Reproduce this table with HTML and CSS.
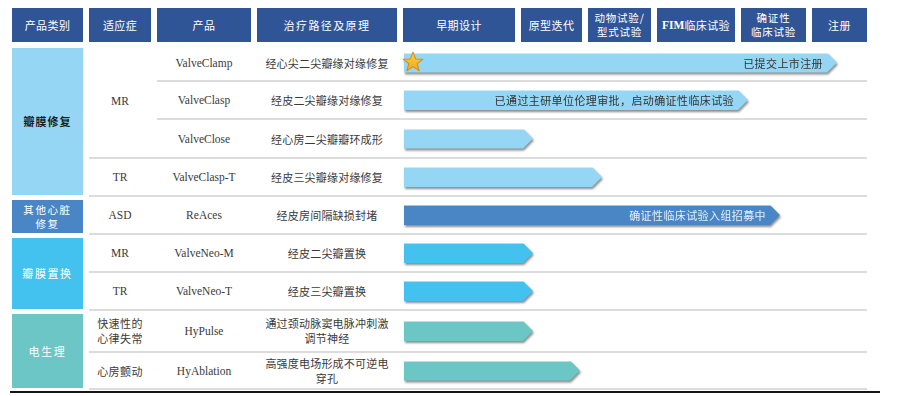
FILE: index.html
```html
<!DOCTYPE html>
<html lang="zh">
<head>
<meta charset="utf-8">
<title>产品管线</title>
<link rel="stylesheet" href="styles.css">
</head>
<body>
<div class="page">
  <div class="head">
    <div class="hc">产品类别</div>
    <div class="hc">适应症</div>
    <div class="hc">产品</div>
    <div class="hc wide">治疗路径及原理</div>
    <div class="hc">早期设计</div>
    <div class="hc">原型迭代</div>
    <div class="hc two">动物试验/<br>型式试验</div>
    <div class="hc"><b class="lat">FIM</b>临床试验</div>
    <div class="hc two">确证性<br>临床试验</div>
    <div class="hc">注册</div>
  </div>

  <div class="body">
    <div class="cat c-light r1s4"><span class="dark">瓣膜修复</span></div>
    <div class="cat c-steel r5s1">其他心脏<br>修复</div>
    <div class="cat c-cyan r6s2">瓣膜置换</div>
    <div class="cat c-teal r8s2">电生理</div>

    <div class="ind r1s3 ln">MR</div>
    <div class="cell prod lat">ValveClamp</div>
    <div class="cell prin">经心尖二尖瓣缘对缘修复</div>
    <div class="cell tl"><div class="arrow" style="width:433px"><span class="fill a-light"><span class="atx">已提交上市注册</span></span><svg class="star" viewBox="0 0 24 24" width="22" height="22"><defs><linearGradient id="sg" x1="0" y1="0" x2="0" y2="1"><stop offset="0" stop-color="#ffd24a"/><stop offset="1" stop-color="#f0a814"/></linearGradient></defs><polygon points="12,1.2 14.9,8.6 22.8,8.9 16.6,13.8 18.8,21.6 12,17.1 5.2,21.6 7.4,13.8 1.2,8.9 9.1,8.6" fill="url(#sg)" stroke="#d98a12" stroke-width="1.1" stroke-linejoin="round"/></svg></div></div>

    <div class="cell prod lat">ValveClasp</div>
    <div class="cell prin">经皮二尖瓣缘对缘修复</div>
    <div class="cell tl"><div class="arrow" style="width:344px"><span class="fill a-light"><span class="atx">已通过主研单位伦理审批，启动确证性临床试验</span></span></div></div>

    <div class="cell prod lat">ValveClose</div>
    <div class="cell prin">经心房二尖瓣瓣环成形</div>
    <div class="cell tl"><div class="arrow" style="width:129px"><span class="fill a-light"></span></div></div>

    <div class="ind ln">TR</div>
    <div class="cell prod lat">ValveClasp-T</div>
    <div class="cell prin">经皮三尖瓣缘对缘修复</div>
    <div class="cell tl"><div class="arrow" style="width:198px"><span class="fill a-light"></span></div></div>

    <div class="ind ln">ASD</div>
    <div class="cell prod lat">ReAces</div>
    <div class="cell prin">经皮房间隔缺损封堵</div>
    <div class="cell tl"><div class="arrow" style="width:376px"><span class="fill a-steel"><span class="atx light">确证性临床试验入组招募中</span></span></div></div>

    <div class="ind ln">MR</div>
    <div class="cell prod lat">ValveNeo-M</div>
    <div class="cell prin">经皮二尖瓣置换</div>
    <div class="cell tl"><div class="arrow" style="width:129px"><span class="fill a-cyan"></span></div></div>

    <div class="ind ln">TR</div>
    <div class="cell prod lat">ValveNeo-T</div>
    <div class="cell prin">经皮三尖瓣置换</div>
    <div class="cell tl"><div class="arrow" style="width:129px"><span class="fill a-cyan"></span></div></div>

    <div class="ind ln two">快速性的<br>心律失常</div>
    <div class="cell prod lat">HyPulse</div>
    <div class="cell prin two">通过颈动脉窦电脉冲刺激<br>调节神经</div>
    <div class="cell tl"><div class="arrow" style="width:129px"><span class="fill a-teal"></span></div></div>

    <div class="ind ln cjk">心房颤动</div>
    <div class="cell prod lat">HyAblation</div>
    <div class="cell prin two">高强度电场形成不可逆电<br>穿孔</div>
    <div class="cell tl"><div class="arrow" style="width:176px"><span class="fill a-teal"></span></div></div>
  </div>
  <div class="rule"></div>
</div>
</body>
</html>
```

FILE: styles.css
```css
* { box-sizing: border-box; }
html, body { margin: 0; padding: 0; background: #ffffff; }
body {
  font-family: "Liberation Serif", "Noto Sans CJK SC", serif;
  font-size: 11px;
  color: #3a3a3a;
}
.page { padding: 8px 0 0 12px; width: 897px; }
.lat { font-family: "Liberation Serif", "Noto Sans CJK SC", serif; }

.head {
  display: grid;
  grid-template-columns: 71px 62px 94px 140px 112px 61px 63px 78px 65px 55px;
  column-gap: 6px;
  height: 34px;
}
.hc {
  background: #2f5597;
  color: #ffffff;
  display: flex;
  align-items: center;
  justify-content: center;
  text-align: center;
  font-family: "Noto Sans CJK SC", sans-serif;
  font-size: 11px;
  letter-spacing: 0.4px;
  line-height: 15px;
}
.hc.wide { letter-spacing: 1.4px; }
.hc.two { letter-spacing: 0.8px; line-height: 14px; font-size: 10.5px; }
.hc b { font-weight: 700; font-size: 11.5px; letter-spacing: 0; }

.body {
  margin-top: 3px;
  display: grid;
  grid-template-columns: 71px 6px 68px 100px 146px 464px;
  grid-template-rows: 37px 38px 39px 38px 38px 38px 38px 42px 37px;
}
.cat {
  grid-column: 1;
  margin: 3px 0 2px;
  display: flex;
  align-items: center;
  justify-content: center;
  text-align: center;
  color: #ffffff;
  font-family: "Noto Sans CJK SC", sans-serif;
  font-size: 11px;
  letter-spacing: 1.6px;
  line-height: 15px;
}
.c-steel { font-size: 10.5px; line-height: 14px; }
.cat .dark { color: #1e1e1e; font-weight: 700; letter-spacing: 1px; }
.c-light { background: #95d6f4; }
.c-steel { background: #4a86c5; }
.c-cyan { background: #43c2ef; }
.c-teal { background: #6cc6c5; }
.r1s4 { grid-row: 1 / span 4; }
.r5s1 { grid-row: 5 / span 1; }
.r6s2 { grid-row: 6 / span 2; }
.r8s2 { grid-row: 8 / span 2; }

.ind, .cell {
  border-bottom: 2px solid #dcdcdc;
  display: flex;
  align-items: center;
  justify-content: center;
  text-align: center;
}
.ind {
  grid-column: 3;
  padding-right: 6px;
  font-size: 11.5px;
}
.r1s3 { grid-row: 1 / span 3; }
.ind.two, .ind.cjk { font-family: "Noto Sans CJK SC", sans-serif; font-size: 11px; letter-spacing: 0.4px; }
.ind.two { text-align: left; line-height: 15px; }
.prod { grid-column: 4; padding-right: 6px; font-size: 11.5px; }
.prin {
  grid-column: 5;
  padding-right: 6px;
  font-family: "Noto Sans CJK SC", sans-serif;
  font-size: 11px;
  letter-spacing: 0.2px;
}
.prin.two { line-height: 15px; }
.tl {
  grid-column: 6;
  justify-content: flex-start;
  padding-left: 1px;
}

.arrow {
  position: relative;
  height: 20px;
  filter: drop-shadow(1px 2px 1px rgba(0, 0, 0, 0.45));
}
.fill {
  display: flex;
  align-items: center;
  justify-content: flex-end;
  height: 100%;
  padding-right: 14px;
  clip-path: polygon(0 0, calc(100% - 10px) 0, 100% 50%, calc(100% - 10px) 100%, 0 100%);
  box-shadow: inset 0 1px 0 rgba(255, 255, 255, 0.5);
}
.a-light { background: #95d6f4; }
.a-steel { background: #4a86c5; }
.a-cyan { background: #43c2ef; }
.a-teal { background: #6cc6c5; }
.atx {
  font-family: "Noto Sans CJK SC", sans-serif;
  font-size: 11px;
  letter-spacing: 0.4px;
  color: #333333;
  white-space: nowrap;
}
.atx.light { color: #e6eff8; }
.star { position: absolute; left: -2px; top: -2px; }

.rule {
  margin: 1px 0 0 -2px;
  width: 870px;
  height: 2px;
  background: #151515;
}
```
